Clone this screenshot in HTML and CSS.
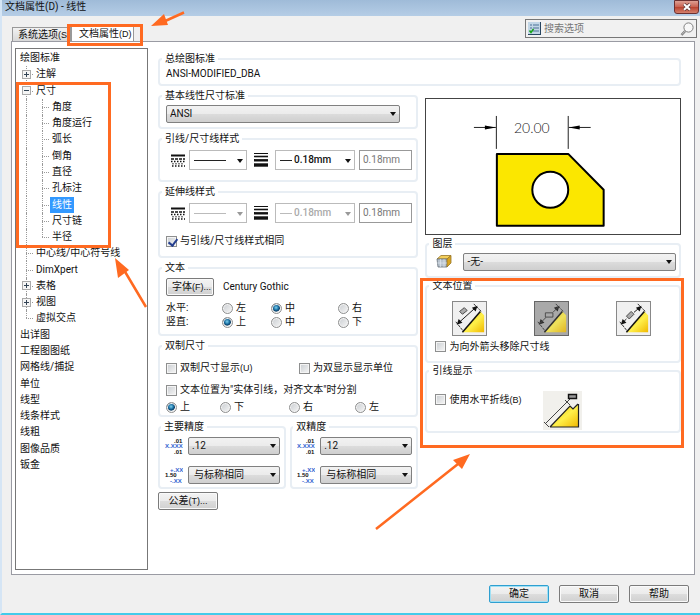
FILE: index.html
```html
<!DOCTYPE html>
<html lang="zh-CN">
<head>
<meta charset="utf-8">
<title>文档属性(D) - 线性</title>
<link rel="stylesheet" href="styles.css">
</head>
<body>
<svg class="defs" width="0" height="0" aria-hidden="true">
  <defs>
    <linearGradient id="gold" x1="0" y1="0" x2="1" y2="1">
      <stop offset="0" stop-color="#d9b400"/><stop offset=".55" stop-color="#fff04a"/><stop offset="1" stop-color="#f0b800"/>
    </linearGradient>
    <symbol id="dashes" viewBox="0 0 14 13">
      <path d="M0 1.5h14" stroke="#111" stroke-width="2"/>
      <path d="M0 5h14" stroke="#111" stroke-width="1.4" stroke-dasharray="3 1"/>
      <path d="M0 7.5h14M1 12h14" stroke="#111" stroke-width="1.4" stroke-dasharray="1.5 1.5"/>
      <path d="M1.5 9.8h12" stroke="#111" stroke-width="1.4" stroke-dasharray="1 2"/>
    </symbol>
    <symbol id="weights" viewBox="0 0 14 14">
      <path d="M0 0.5h14" stroke="#111"/>
      <path d="M0 3.5h14" stroke="#111" stroke-width="1.6"/>
      <path d="M0 7.3h14" stroke="#111" stroke-width="2.4"/>
      <path d="M0 12h14" stroke="#111" stroke-width="3.4"/>
    </symbol>
    <symbol id="precision" viewBox="0 0 18 18">
      <text x="9" y="6" class="tiny">.01</text>
      <text x="0" y="11" class="tiny blue">X.XXX</text>
      <text x="9" y="17" class="tiny">.01</text>
    </symbol>
    <symbol id="tolerance" viewBox="0 0 18 18">
      <text x="5" y="6" class="tiny blue">+.XX</text>
      <text x="0" y="11" class="tiny">1.50</text>
      <text x="5" y="17" class="tiny blue">-.XX</text>
    </symbol>
    <symbol id="part" viewBox="0 0 35 35">
      <path d="M10 32 29 10 33 14V32Z" fill="url(#gold)"/>
      <path d="M10 32 29 10" stroke="#111" stroke-width="1.6"/>
      <path d="M3 21 11 31M22 2 30 10" stroke="#222" stroke-width="1" stroke-dasharray="3 1"/>
      <path d="M4 24l2-6 4 4ZM26 4l-6 2 4 4Z" fill="#111"/>
    </symbol>
  </defs>
</svg>

<div class="dialog">
  <header class="titlebar">
    <h1>文档属性(D) - 线性</h1>
    <button class="close" type="button" aria-label="关闭">
      <svg width="10" height="8" viewBox="0 0 10 8"><path d="M2 1.2 8 6.8M8 1.2 2 6.8" stroke="#5b3a3a" stroke-width="3.4"/><path d="M2 1.2 8 6.8M8 1.2 2 6.8" stroke="#fff" stroke-width="2"/></svg>
    </button>
  </header>

  <div class="toolbar">
    <nav class="tabs">
      <button class="tab" type="button">系统选项<small>(S)</small></button>
      <button class="tab active" type="button">文档属性<small>(D)</small></button>
    </nav>
    <label class="search">
      <svg width="13" height="13" viewBox="0 0 13 13"><rect width="13" height="13" fill="#c2d6e6"/><path d="M0 12.5h13M12.5 0v13" stroke="#27455f"/><path d="M5 3h6M5 6h6M5 9h6" stroke="#4c7395"/><path d="M2 3h2M2 6h2" stroke="#4c7395"/><path d="M1.5 8.5 3 10.5 5.5 7" stroke="#18a418" stroke-width="1.6" fill="none"/></svg>
      <input type="text" placeholder="搜索选项" aria-label="搜索选项">
      <svg width="14" height="14" viewBox="0 0 14 14"><circle cx="8.5" cy="5.5" r="4.6" fill="#f8f8f8" stroke="#808080"/><path d="M5.2 9 1.5 13" stroke="#777" stroke-width="2.4"/><path d="M5.2 9 1.8 12.6" stroke="#ddd" stroke-width=".8"/></svg>
    </label>
  </div>

  <main class="panel">
    <ul class="tree">
      <li><span class="name">绘图标准</span></li>
      <li><i class="cell tee"><button type="button" class="box plus" aria-label="展开"></button></i><span class="name">注解</span></li>
      <li><i class="cell tee"><button type="button" class="box" aria-label="折叠"></button></i><span class="name">尺寸</span></li>
      <li><i class="cell rail"></i><i class="cell tee"></i><span class="name">角度</span></li>
      <li><i class="cell rail"></i><i class="cell tee"></i><span class="name">角度运行</span></li>
      <li><i class="cell rail"></i><i class="cell tee"></i><span class="name">弧长</span></li>
      <li><i class="cell rail"></i><i class="cell tee"></i><span class="name">倒角</span></li>
      <li><i class="cell rail"></i><i class="cell tee"></i><span class="name">直径</span></li>
      <li><i class="cell rail"></i><i class="cell tee"></i><span class="name">孔标注</span></li>
      <li><i class="cell rail"></i><i class="cell tee"></i><span class="name selected">线性</span></li>
      <li><i class="cell rail"></i><i class="cell tee"></i><span class="name">尺寸链</span></li>
      <li><i class="cell rail"></i><i class="cell tee end"></i><span class="name">半径</span></li>
      <li><i class="cell tee"></i><span class="name">中心线/中心符号线</span></li>
      <li><i class="cell tee"></i><span class="name">DimXpert</span></li>
      <li><i class="cell tee"><button type="button" class="box plus" aria-label="展开"></button></i><span class="name">表格</span></li>
      <li><i class="cell tee"><button type="button" class="box plus" aria-label="展开"></button></i><span class="name">视图</span></li>
      <li><i class="cell tee end"></i><span class="name">虚拟交点</span></li>
      <li><span class="name">出详图</span></li>
      <li><span class="name">工程图图纸</span></li>
      <li><span class="name">网格线/捕捉</span></li>
      <li><span class="name">单位</span></li>
      <li><span class="name">线型</span></li>
      <li><span class="name">线条样式</span></li>
      <li><span class="name">线粗</span></li>
      <li><span class="name">图像品质</span></li>
      <li><span class="name">钣金</span></li>
    </ul>

    <form class="settings">
      <fieldset class="overall">
        <legend>总绘图标准</legend>
        <p>ANSI-MODIFIED_DBA</p>
      </fieldset>

      <div class="column">
        <fieldset class="base">
          <legend>基本线性尺寸标准</legend>
          <span class="combo"><select aria-label="基本线性尺寸标准"><option>ANSI</option></select></span>
        </fieldset>

        <fieldset class="leader">
          <legend>引线/尺寸线样式</legend>
          <div class="line-row">
            <svg width="14" height="13"><use href="#dashes"/></svg>
            <span class="combo flat stroke"><select aria-label="线型"><option></option></select></span>
            <svg width="14" height="14"><use href="#weights"/></svg>
            <span class="combo flat weight"><select aria-label="线粗"><option>0.18mm</option></select></span>
            <input class="size" type="text" value="0.18mm" aria-label="自定义线粗">
          </div>
        </fieldset>

        <fieldset class="extension">
          <legend>延伸线样式</legend>
          <div class="line-row">
            <svg width="14" height="13"><use href="#dashes"/></svg>
            <span class="combo flat stroke off"><select disabled aria-label="延伸线线型"><option></option></select></span>
            <svg width="14" height="14"><use href="#weights"/></svg>
            <span class="combo flat weight off"><select disabled aria-label="延伸线线粗"><option>0.18mm</option></select></span>
            <input class="size" type="text" value="0.18mm" aria-label="延伸线自定义线粗">
          </div>
          <label class="choice"><input type="checkbox" checked>与引线/尺寸线样式相同</label>
        </fieldset>

        <fieldset class="text">
          <legend>文本</legend>
          <div class="font-row">
            <button class="btn" type="button">字体<small>(F)...</small></button>
            <span>Century Gothic</span>
          </div>
          <div class="align-row">
            <span>水平:</span>
            <label class="choice"><input type="radio" name="h">左</label>
            <label class="choice"><input type="radio" name="h" checked>中</label>
            <label class="choice"><input type="radio" name="h">右</label>
          </div>
          <div class="align-row">
            <span>竖直:</span>
            <label class="choice"><input type="radio" name="v" checked>上</label>
            <label class="choice"><input type="radio" name="v">中</label>
            <label class="choice"><input type="radio" name="v">下</label>
          </div>
        </fieldset>

        <fieldset class="dual">
          <legend>双制尺寸</legend>
          <div class="dual-row">
            <label class="choice"><input type="checkbox"><span>双制尺寸显示<small>(U)</small></span></label>
            <label class="choice"><input type="checkbox">为双显示显示单位</label>
          </div>
          <label class="choice"><input type="checkbox">文本位置为"实体引线，对齐文本"时分割</label>
          <div class="side-row">
            <label class="choice"><input type="radio" name="side" checked>上</label>
            <label class="choice"><input type="radio" name="side">下</label>
            <label class="choice"><input type="radio" name="side">右</label>
            <label class="choice"><input type="radio" name="side">左</label>
          </div>
        </fieldset>

        <div class="pair">
          <fieldset class="precision">
            <legend>主要精度</legend>
            <div class="icon-row"><svg width="18" height="18"><use href="#precision"/></svg><span class="combo"><select aria-label="主要精度"><option>.12</option></select></span></div>
            <div class="icon-row indent"><svg width="18" height="18"><use href="#tolerance"/></svg><span class="combo"><select aria-label="主要公差精度"><option>与标称相同</option></select></span></div>
          </fieldset>
          <fieldset class="precision">
            <legend>双精度</legend>
            <div class="icon-row"><svg width="18" height="18"><use href="#precision"/></svg><span class="combo"><select aria-label="双精度"><option>.12</option></select></span></div>
            <div class="icon-row indent"><svg width="18" height="18"><use href="#tolerance"/></svg><span class="combo"><select aria-label="双公差精度"><option>与标称相同</option></select></span></div>
          </fieldset>
        </div>

        <button class="btn tolerance" type="button">公差<small>(T)...</small></button>
      </div>

      <div class="column side">
        <div class="preview">
          <svg viewBox="0 0 254 135" role="img" aria-label="线性尺寸预览">
            <path d="M71 55H142.500L178 91V127H71Z" fill="#fbe700" stroke="#000" stroke-width="2" stroke-linejoin="round"/>
            <circle cx="124.500" cy="91" r="18" fill="#fff" stroke="#000" stroke-width="2"/>
            <path d="M70.500 17V50M142.500 17V50M48 28.500H70M143 28.500H165" stroke="#222"/>
            <path d="M59 26.500 70 28.500 59 30.500ZM154 26.500 143 28.500 154 30.500Z" fill="#000"/>
            <text x="106" y="34" class="dimension">20.00</text>
          </svg>
        </div>

        <fieldset class="layer">
          <legend>图层</legend>
          <div class="layer-row">
            <svg width="16" height="13" viewBox="0 0 16 13"><path d="M1 4 5 .5H15L11 4Z" fill="#f4cf5a" stroke="#98762a" stroke-width=".8"/><path d="M1 4H11V12H2Z" fill="#b9c4cf" stroke="#66707a" stroke-width=".8"/><path d="M11 4 15 .5V8L11 12Z" fill="#d9a520" stroke="#98762a" stroke-width=".8"/><path d="M4.500 4V12M8 4V12M1 8H11" stroke="#e6edf3" stroke-width=".6"/></svg>
            <span class="combo"><select aria-label="图层"><option>-无-</option></select></span>
          </div>
        </fieldset>

        <fieldset class="position">
          <legend>文本位置</legend>
          <div class="tiles">
            <button class="tile" type="button" aria-label="实体引线，对齐文本"><svg width="33" height="33" viewBox="0 0 35 35"><use href="#part" width="35" height="35"/><path d="M5 23 25 5" stroke="#111"/><path d="M7 10 12 6 15 9 10 13Z" fill="#aaa" stroke="#444"/></svg></button>
            <button class="tile pressed" type="button" aria-label="折断引线，水平文本"><svg width="33" height="33" viewBox="0 0 35 35"><use href="#part" width="35" height="35"/><path d="M5 23 12 16M19 11 25 5" stroke="#333"/><path d="M11 11.500H19V16H11Z" fill="#aaa" stroke="#333"/></svg></button>
            <button class="tile" type="button" aria-label="折断引线，对齐文本"><svg width="33" height="33" viewBox="0 0 35 35"><use href="#part" width="35" height="35"/><path d="M5 23 10 18M18 11 25 5" stroke="#111"/><path d="M10 15 15 10 18 13 13 18Z" fill="#aaa" stroke="#444"/></svg></button>
          </div>
          <label class="choice"><input type="checkbox">为向外箭头移除尺寸线</label>
        </fieldset>

        <fieldset class="display">
          <legend>引线显示</legend>
          <div class="display-row">
            <label class="choice"><input type="checkbox"><span>使用水平折线<small>(B)</small></span></label>
            <svg width="39" height="39" viewBox="0 0 39 39"><rect width="39" height="39" fill="#f1f0ec"/><path d="M7 36 27 15 30 18 35 13V36Z" fill="url(#gold)"/><path d="M7 36 27 15 30 18 35 13M35.500 13V36H7" fill="none" stroke="#222" stroke-width="1.200"/><path d="M3 32 25 10M1 31 6 36M22 9 27 14M25 10 28 7" stroke="#444"/><path d="M25.500 3.500H33.500V7.500H25.500Z" fill="#999" stroke="#111" stroke-width="1.400"/></svg>
          </div>
        </fieldset>
      </div>
    </form>
  </main>

  <footer class="actions">
    <button class="btn primary" type="button">确定</button>
    <button class="btn" type="button">取消</button>
    <button class="btn" type="button">帮助</button>
  </footer>
</div>

<svg class="notes" width="700" height="615" viewBox="0 0 700 615" aria-hidden="true">
  <g fill="none" stroke="#ff6a21" stroke-width="3">
    <path d="M68.500 25.500H141.500V44.500H68.500Z"/>
    <path d="M17.500 83.500H109.500V246.500H17.500Z"/>
    <path d="M421.500 279.500H682.500V446.500H421.500Z"/>
    <path d="M184 12.500 163 22M146 307 124 270M376 529 458 464" stroke-width="2.500"/>
  </g>
  <path d="M151 26 164 14 168 25ZM115 258 129 270 118 278ZM470 454 453 460 462 469Z" fill="#ff6a21"/>
</svg>
</body>
</html>
```
FILE: styles.css
```css
* { box-sizing: border-box; }

body {
  margin: 0;
  position: relative;
  background: #f0f0f0;
  color: #111;
  font: 10px/14px Roboto, "Noto Sans CJK SC", sans-serif;
}

button, input, select { font: inherit; color: inherit; margin: 0; }
small { font: 9px/12px "Liberation Sans", sans-serif; }
svg { display: block; flex: none; }
.defs { position: absolute; }

.dialog {
  display: flex;
  flex-direction: column;
  min-height: 100vh;
  border-left: 2px solid #d5e5f5;
  border-bottom: 2px solid #43cbea;
}

/* title bar */
.titlebar {
  display: flex;
  justify-content: space-between;
  align-items: flex-start;
  height: 16px;
  padding-left: 3px;
  background: linear-gradient(#9fbbd8, #b5cde6);
}
.titlebar h1 { margin: 0; font-size: 10px; font-weight: 400; line-height: 14px; }
.close {
  display: flex;
  align-items: center;
  justify-content: center;
  width: 25px;
  height: 14px;
  margin-right: 1px;
  padding: 0;
  border: 1px solid #6b3030;
  border-radius: 0 0 3px 3px;
  background: linear-gradient(#dea093, #c8604f 50%, #b8402c 50%, #d4806c);
}

/* tabs and search */
.toolbar {
  display: flex;
  justify-content: space-between;
  align-items: flex-end;
  height: 25px;
  padding: 0 3px 0 10px;
}
.tabs { display: flex; align-items: flex-end; }
.tab {
  width: 59px;
  height: 14px;
  padding: 0 0 0 5px;
  border: 1px solid #999;
  border-bottom: 0;
  background: linear-gradient(#f2f2f2, #d8d8d8);
  line-height: 14px;
  text-align: left;
  white-space: nowrap;
}
.tab.active { width: 63px; height: 16px; padding-left: 7px; background: #fff; line-height: 15px; }
.search {
  display: flex;
  align-items: center;
  gap: 3px;
  width: 172px;
  height: 19px;
  margin-bottom: 3px;
  padding: 0 2px;
  border: 1px solid #777;
  background: #f1f1f1;
}
.search input { flex: 1; min-width: 0; padding: 0; border: 0; background: none; outline: 0; }
.search input::placeholder { color: #777; opacity: 1; }

/* tab page */
.panel {
  flex: 1;
  display: flex;
  gap: 10px;
  margin: 0 5px 0 9px;
  padding: 6px 13px 4px 3px;
  border: 1px solid #9a9ba3;
  background: #fff;
}

/* navigation tree */
.tree {
  flex: none;
  display: grid;
  grid-template-rows: repeat(26, 1fr);
  width: 133px;
  margin: 0;
  padding: 1px 0 96px 2px;
  border: 1px solid #777;
  list-style: none;
}
.tree li { display: flex; align-items: center; min-height: 0; white-space: nowrap; }
.name { padding: 0 2px; line-height: 16px; }
.name.selected { background: #3399ff; color: #fff; }
.cell { position: relative; align-self: stretch; flex: none; display: flex; align-items: center; width: 16px; }
.cell::before { content: ""; position: absolute; left: 8px; top: 0; bottom: 0; border-left: 1px dotted #999; }
.cell.end::before { bottom: 50%; }
.cell.tee::after { content: ""; position: absolute; left: 8px; right: 1px; top: 50%; border-top: 1px dotted #999; }
.box {
  position: relative;
  z-index: 1;
  width: 9px;
  height: 9px;
  margin-left: 4px;
  padding: 0;
  border: 1px solid #aaa;
  background: linear-gradient(#345, #345) center / 5px 1px no-repeat, #f5f5f5;
}
.box.plus {
  background: linear-gradient(#345, #345) center / 5px 1px no-repeat, linear-gradient(#345, #345) center / 1px 5px no-repeat, #f5f5f5;
}

/* settings */
.settings {
  flex: 1;
  display: grid;
  grid-template-columns: 261fr 256fr;
  grid-template-rows: auto 1fr;
  gap: 3px 7px;
  padding-top: 4px;
}
.column { display: flex; flex-direction: column; gap: 3px; min-width: 0; }
.column.side { gap: 1px; padding-top: 9px; }
.overall { grid-column: 1 / -1; }

fieldset { min-width: 0; margin: 0; padding: 0 4px 0 6px; border: 2px solid #e8eef4; border-radius: 4px; }
legend { height: 14px; margin-left: -4px; padding: 0 3px; }
.overall p { margin: 0; line-height: 16px; padding-bottom: 2px; }
.base { padding: 2px 16px 4px 6px; }
.leader { padding-top: 4px; padding-bottom: 10px; }
.extension { padding-top: 4px; padding-bottom: 8px; }
.extension .choice { margin-top: 11px; }
.text { padding-top: 3px; padding-bottom: 5px; }
.dual { padding-top: 8px; padding-bottom: 1px; }
.precision { padding: 3px 4px 3px 5px; }
.layer { padding: 2px 3px 5px 6px; }
.position { padding: 8px 8px 7px; }
.display { padding: 13px 8px 1px; }
.position legend, .display legend { margin-left: -6px; }

/* controls */
.combo { position: relative; display: flex; flex: 1; min-width: 0; }
.combo::after {
  content: "";
  position: absolute;
  right: 4px;
  top: 7px;
  border: 3px solid transparent;
  border-top: 4px solid #111;
  border-bottom: 0;
  pointer-events: none;
}
.combo select {
  appearance: none;
  width: 100%;
  height: 18px;
  padding: 0 12px 0 3px;
  border: 1px solid #808080;
  border-radius: 2px;
  background: linear-gradient(#f2f2f2, #ebebeb 50%, #dcdcdc 50%, #cfcfcf);
  line-height: 16px;
}
.combo.flat select { height: 20px; border-color: #bbb; border-radius: 0; background: #fff; opacity: 1; }
.combo.flat::after { top: 9px; }
.combo.flat::before { content: ""; position: absolute; left: 5px; top: 10px; width: 32px; border-top: 1px solid #222; }
.combo.weight::before { width: 12px; }
.combo.weight select { padding-left: 18px; font-weight: 500; }
.combo.off select { color: #aaa; }
.combo.off::before { border-color: #bbb; }
.combo.off::after { border-top-color: #999; }
.size { width: 100%; height: 20px; padding: 0 3px 2px; border: 1px solid #999; background: #fff; color: #777; }

.choice { display: flex; align-items: center; gap: 3px; line-height: 14px; white-space: nowrap; }
.choice input {
  appearance: none;
  position: relative;
  flex: none;
  width: 11px;
  height: 11px;
  border: 1px solid #8e8f8f;
  background: linear-gradient(135deg, #c9cdd1, #f6f6f6);
  box-shadow: inset 0 0 0 1px #f4f4f4;
}
.choice input[type="radio"] { border-radius: 50%; }
.choice input[type="radio"]:checked { background: radial-gradient(circle at 45% 40%, #7cd0ee, #156a9e 35%, #0b3a60 50%, #e8eef2 60%); }
.choice input[type="checkbox"]:checked::after {
  content: "";
  position: absolute;
  left: 3px;
  top: 0;
  width: 4px;
  height: 7px;
  border: solid #26408f;
  border-width: 0 2px 2px 0;
  transform: rotate(38deg);
}

.btn {
  height: 18px;
  padding: 0 5px;
  border: 1px solid #7b7b7b;
  border-radius: 2px;
  background: linear-gradient(#f3f3f3, #ebebeb 50%, #dddddd 50%, #d0d0d0);
  box-shadow: inset 0 0 0 1px #fafafa;
  line-height: 14px;
  white-space: nowrap;
}

/* rows */
.line-row { display: grid; grid-template-columns: 23px 58px 28px 80px 1fr; align-items: center; }
.line-row > svg { justify-self: center; }
.line-row .size { width: auto; min-width: 0; margin-left: 4px; }
.font-row { display: flex; align-items: center; gap: 9px; margin-bottom: 5px; }
.font-row .btn { width: 48px; }
.align-row { display: grid; grid-template-columns: 56px 49px 67px 1fr; }
.dual-row { display: grid; grid-template-columns: 133px 1fr; margin-bottom: 8px; }
.side-row { display: grid; grid-template-columns: 54px 69px 66px 1fr; margin-top: 3px; }
.pair { display: grid; grid-template-columns: 1fr 1fr; gap: 4px; }
.icon-row { display: flex; gap: 5px; }
.icon-row + .icon-row { margin-top: 11px; }
.icon-row.indent select { padding-left: 5px; }
.tolerance { align-self: flex-start; width: 60px; }
.tiny { font: bold 6px "Liberation Sans", sans-serif; fill: #111; }
.tiny.blue { fill: #2f62d0; }

.preview { border: 1px solid #444; background: #fff; margin-bottom: 1px; }
.preview svg { width: 100%; height: auto; }
.dimension { font: 300 14px Lato, sans-serif; text-anchor: middle; fill: #222; }
.layer-row { display: flex; align-items: center; gap: 11px; padding-left: 3px; }
.tiles { display: flex; justify-content: space-between; padding: 0 20px 0 17px; margin-bottom: 4px; }
.tile { width: 35px; height: 35px; padding: 0; border: 1px solid #888; background: #f0f0f0; }
.tile.pressed { background: #a9a9a9; border-color: #666; }
.tile.pressed svg { opacity: .8; }
.display-row { display: flex; align-items: flex-start; gap: 22px; }
.display-row .choice { line-height: 18px; }

.actions { display: flex; justify-content: flex-end; gap: 10px; padding: 10px 11px; }
.actions .btn { width: 60px; }
.actions .primary { border-color: #2f9fd0; box-shadow: inset 0 0 0 1px #9fe0f5; }

/* callouts */
.notes { position: absolute; left: 0; top: 0; pointer-events: none; }
```
